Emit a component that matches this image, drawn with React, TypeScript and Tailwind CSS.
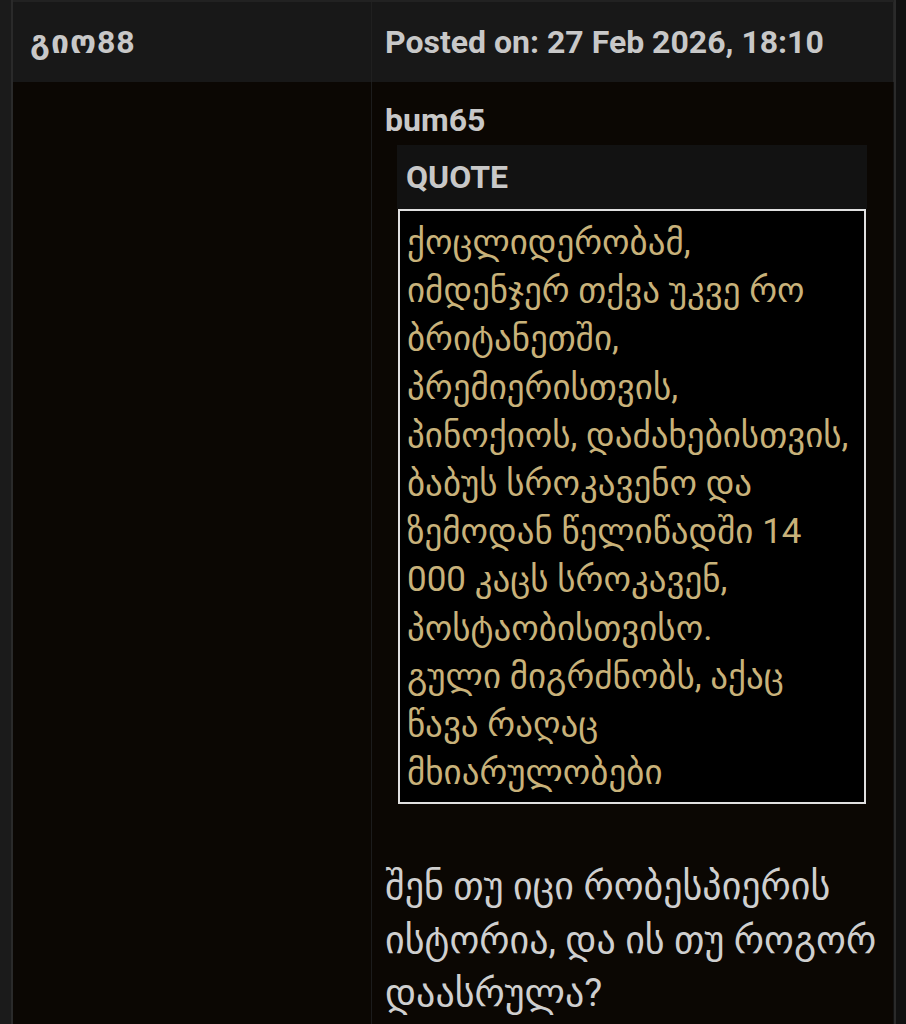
import React from "react";

const quoteLines = [
  "ქოცლიდერობამ,",
  "იმდენჯერ თქვა უკვე რო",
  "ბრიტანეთში,",
  "პრემიერისთვის,",
  "პინოქიოს, დაძახებისთვის,",
  "ბაბუს სროკავენო და",
  "ზემოდან წელიწადში 14",
  "000 კაცს სროკავენ,",
  "პოსტაობისთვისო.",
  "გული მიგრძნობს, აქაც",
  "წავა რაღაც",
  "მხიარულობები",
];

const postLines = [
  "შენ თუ იცი რობესპიერის",
  "ისტორია, და ის თუ როგორ",
  "დაასრულა?",
];

export default function App() {
  return (
    <div
      className="flex min-h-screen bg-[#111111] overflow-hidden"
      style={{ fontFamily: "Roboto, 'DejaVu Sans', sans-serif" }}
    >
      <div className="w-[11px] shrink-0 bg-[#1b1b1b]" />
      <div className="w-[2px] shrink-0 bg-[#2a2a2a]" />
      <div className="flex-1 min-w-0 flex flex-col border-t-2 border-[#222222] min-h-[1024px]">
        <div className="flex h-[80px] bg-[#181818] border-r border-[#262626]">
          <div className="w-[359px] shrink-0 flex items-center pl-[17px] border-r border-[#202020]">
            <span className="text-[32px] font-bold text-[#c8c8c8] tracking-[1px]">გიო88</span>
          </div>
          <div className="flex-1 min-w-0 flex items-center pl-[13px]">
            <span className="text-[32px] font-bold text-[#c8c8c8] whitespace-nowrap">
              Posted on: 27 Feb 2026, 18:10
            </span>
          </div>
        </div>
        <div className="flex flex-1 min-w-0 bg-[#0b0703] mr-[1px]">
          <div className="w-[359px] shrink-0 border-r border-[#1c1c1c]" />
          <div className="flex-1 min-w-0 pl-[13px] pr-[26px] pt-[20px]">
            <div className="text-[32px] font-bold text-[#c8c8c8] leading-[36px]">bum65</div>
            <div className="ml-[12px] mt-[7px]">
              <div className="h-[64px] bg-[#121212] flex items-center pl-[9px]">
                <span className="text-[32px] font-bold text-[#c8c8c8]">QUOTE</span>
              </div>
              <div className="mx-[1px] bg-black border-2 border-[#e0e0e0] pl-[7px] pr-[4px] pt-[8px] pb-[5px] overflow-hidden">
                {quoteLines.map((l, i) => (
                  <div key={i} className="text-[35px] leading-[48.2px] text-[#c8b27a] whitespace-nowrap">
                    {l}
                  </div>
                ))}
              </div>
            </div>
            <div className="mt-[56px]">
              {postLines.map((l, i) => (
                <div key={i} className="text-[38px] leading-[53.5px] text-[#cfcfcf] whitespace-nowrap">
                  {l}
                </div>
              ))}
            </div>
          </div>
        </div>
      </div>
      <div className="w-[2px] shrink-0 bg-[#2a2a2a]" />
      <div className="w-[10px] shrink-0 bg-[#111111]" />
    </div>
  );
}
